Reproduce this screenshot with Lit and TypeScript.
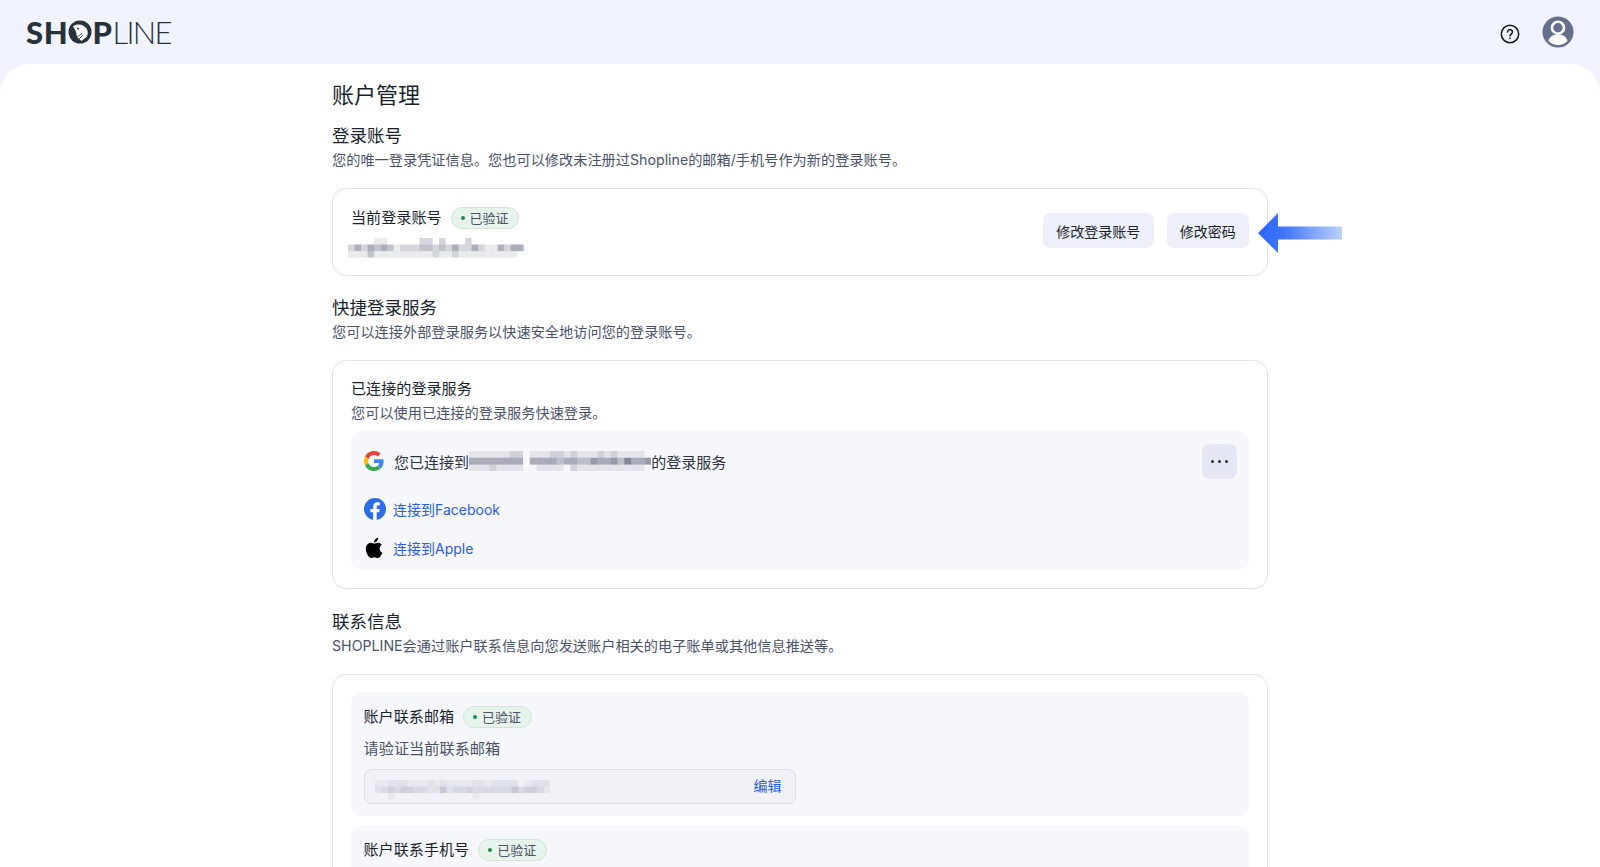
import { LitElement, html, css, svg } from "lit";
import { customElement, property } from "lit/decorators.js";

@customElement("pixel-mask")
class PixelMask extends LitElement {
  @property({ type: Array }) rows: string[] = [];
  @property({ type: Number }) cell = 6.5;
  @property({ type: Number }) scale = 7;
  static styles = css`
    :host { display: block; }
    svg { display: block; filter: blur(0.6px); }
  `;
  render() {
    const w = Math.max(...this.rows.map((r) => r.length)) * this.cell;
    const h = this.rows.length * this.cell;
    return html`<svg width=${w} height=${h} viewBox="0 0 ${w} ${h}">
      ${this.rows.map((r, y) =>
        [...r].map((c, x) =>
          c === "0"
            ? null
            : svg`<rect x=${x * this.cell} y=${y * this.cell} width=${this.cell + 0.1} height=${this.cell + 0.1} fill="#6f7487" fill-opacity=${Number(c) / this.scale}></rect>`
        )
      )}
    </svg>`;
  }
}

@customElement("app-root")
class AppRoot extends LitElement {
  static styles = css`
    :host {
      display: block;
      height: 100vh;
      overflow: hidden;
      background: #f1f4fe;
      font-family: Inter, "Noto Sans CJK SC", sans-serif;
      color: #1a1f2c;
    }
    .top {
      height: 64px;
      display: flex;
      align-items: center;
      justify-content: space-between;
      padding: 0 26px;
    }
    .logo { display: flex; align-items: center; height: 24px; color: #27323d; font-family: Lato, sans-serif; font-size: 31px; line-height: 24px; margin-top: -1px; }
    .logo b { font-weight: 900; letter-spacing: 0.7px; }
    .logo i { font-style: normal; font-weight: 300; letter-spacing: -1.8px; margin-left: 0; }
    .tools { display: flex; align-items: center; gap: 22px; }
    .help { margin-top: 4px; }
    .sheet {
      background: #fff;
      border-radius: 30px 30px 0 0;
      height: 803px;
      overflow: hidden;
      padding: 15px 332px 0;
      box-sizing: border-box;
    }
    h1 { margin: 0 0 13px; font-size: 22px; line-height: 32px; font-weight: 400; }
    h2 { margin: 0; font-size: 17.5px; line-height: 24px; font-weight: 400; }
    .sub { margin: 2px 0 17.5px; font-size: 14.2px; line-height: 20px; color: #4a5266; }
    .card {
      position: relative;
      border: 1.5px solid #dfe2ee;
      border-radius: 14px;
      padding: 18px;
      box-sizing: border-box;
      margin-bottom: 20.5px;
    }
    .card.services { margin-bottom: 21.5px; }
    .account { height: 88px; display: flex; justify-content: space-between; align-items: center; }
    .line { display: flex; align-items: center; gap: 9px; font-size: 15.1px; line-height: 22px; color: #1a1f2c; }
    .badge {
      display: inline-flex; align-items: center; gap: 5px;
      height: 22px; box-sizing: border-box; padding: 0 9.5px 0 9px;
      background: #e6f4ec; border: 1px solid #cfe6d9; border-radius: 11px;
      font-size: 13px; color: #4a5266;
    }
    .badge::before { content: ""; width: 4px; height: 4px; border-radius: 50%; background: #1f8a4c; }
    .acct-left { display: flex; flex-direction: column; gap: 9px; margin: 2px 0 0 -3px; }
    .acct-left .line { margin-left: 3px; }
    .btns { display: flex; gap: 13px; margin-top: -2px; }
    .btn {
      height: 35px; padding: 0 13.25px; display: flex; align-items: center;
      background: #eef0f9; border-radius: 7px; font-size: 14px; color: #1a1f2c;
    }
    .inner { background: #f7f8fc; border-radius: 10px; }
    .conn { margin-top: 8px; padding: 13px 12.5px 0 13px; height: 139px; box-sizing: border-box; }
    .row1 { display: flex; align-items: center; height: 35px; font-size: 15px; color: #2c3240; }
    .row1 .txt { margin-left: 10px; }
    .more {
      margin-left: auto; width: 35px; height: 35px; border-radius: 8px; background: #e5e7f4;
      display: flex; align-items: center; justify-content: center; gap: 4px;
    }
    .more span { width: 3px; height: 3px; border-radius: 50%; background: #2c3240; }
    .link { display: flex; align-items: center; gap: 7px; font-size: 14px; color: #2a5bea; height: 24px; }
    .link.f { margin-top: 5.5px; padding-top: 12px; height: 26px; }
    .link.a { margin-top: 13.5px; }
    .small-sub { margin: 3px 0 0; font-size: 14.2px; line-height: 20px; color: #4a5266; }
    .ctitle { font-size: 15.1px; line-height: 22px; margin-top: -1px; }
    .contact { padding: 17.5px 18px 0; height: 300px; margin: 0; }
    .panel { padding: 14px 13px 13px 12.5px; box-sizing: border-box; height: 124px; margin-bottom: 9px; }
    .panel .small-sub { margin-top: 11px; font-size: 15.2px; }
    .input {
      margin-top: 10px; width: 432px; height: 35px; box-sizing: border-box;
      border: 1.5px solid #dcdee9; border-radius: 7px; background: #f1f2f7;
      display: flex; align-items: center; justify-content: space-between; padding: 0 13px 0 10px;
      font-size: 14px; color: #2a5bea;
    }
    .input pixel-mask { margin-top: 7px; }
    .input span { margin-top: -3px; }
    .arrow { position: absolute; left: 925px; top: 23px; }
  `;

  private acct = [
    "0000110000022020002000000000",
    "242434312223323242242114244",
    "111311111111121121111111110",
  ];
  private google = [
    "111111220111221211121211110",
    "444444440444434433544536445",
    "111211110011110211111111110",
  ];
  private email = [
    "112221112121111221222201222",
    "234344332252334333333534431",
    "001000000000000100000000000",
  ];

  render() {
    return html`
      <header class="top">
        <div class="logo">
          <b>SH</b>
          <svg width="24" height="24" viewBox="0 0 24 24" aria-hidden="true">
            <circle cx="12" cy="12" r="11.5" fill="#27323d"></circle>
            <path d="M5 6.500C9 3.500 15 4 18.500 8.500c1.500 2.200 1.600 5.500.5 8L13.500 21 9 17l-1-5.500L5 6.500z" fill="#fff"></path>
            <path d="M9 17l5-3.500M11 19l4-4" stroke="#27323d" stroke-width="0.8" fill="none"></path>
            <circle cx="10" cy="8.500" r="1" fill="#27323d"></circle>
          </svg>
          <b>P</b><i>LINE</i>
        </div>
        <div class="tools">
          <svg class="help" width="20" height="20" viewBox="0 0 20 20" fill="none" stroke="#14171f" stroke-width="1.5" aria-hidden="true">
            <circle cx="10" cy="10" r="8.700"></circle>
            <path d="M7.600 8a2.400 2.400 0 1 1 3.700 2c-.9.600-1.300 1-1.300 2" stroke-linecap="round"></path>
            <circle cx="10" cy="14.300" r=".6" fill="#14171f" stroke-width=".6"></circle>
          </svg>
          <svg width="32" height="32" viewBox="0 0 32 32" aria-hidden="true">
            <circle cx="16" cy="16" r="15.500" fill="#64708c"></circle>
            <circle cx="16" cy="11.700" r="6" fill="none" stroke="#fff" stroke-width="2.600"></circle>
            <path d="M6.500 25c1.200-4.800 5-6.400 9.500-6.400s8.300 1.600 9.500 6.400A14 14 0 0 1 16 29a14 14 0 0 1-9.500-4z" fill="#fff"></path>
          </svg>
        </div>
      </header>
      <main class="sheet">
        <h1>账户管理</h1>
        <h2>登录账号</h2>
        <p class="sub">您的唯一登录凭证信息。您也可以修改未注册过Shopline的邮箱/手机号作为新的登录账号。</p>
        <section class="card account">
          <div class="acct-left">
            <div class="line">当前登录账号 <span class="badge">已验证</span></div>
            <pixel-mask .rows=${this.acct}></pixel-mask>
          </div>
          <div class="btns">
            <div class="btn">修改登录账号</div>
            <div class="btn">修改密码</div>
          </div>
          <svg class="arrow" width="84" height="42" viewBox="0 0 84 42" aria-hidden="true">
            <defs>
              <linearGradient id="ag" x1="0" x2="1" y1="0" y2="0">
                <stop offset="0" stop-color="#2f66fb"></stop>
                <stop offset="0.3" stop-color="#3f74fc"></stop>
                <stop offset="1" stop-color="#bcd2ff"></stop>
              </linearGradient>
            </defs>
            <path d="M0 21 20 1v13.500h64v13H20V41z" fill="url(#ag)"></path>
          </svg>
        </section>

        <h2>快捷登录服务</h2>
        <p class="sub">您可以连接外部登录服务以快速安全地访问您的登录账号。</p>
        <section class="card services">
          <div class="ctitle">已连接的登录服务</div>
          <p class="small-sub">您可以使用已连接的登录服务快速登录。</p>
          <div class="inner conn">
            <div class="row1">
              <svg width="20" height="20" viewBox="0 0 48 48" aria-hidden="true">
                <path fill="#EA4335" d="M24 9.500c3.540 0 6.710 1.220 9.210 3.600l6.850-6.850C35.900 2.380 30.470 0 24 0 14.620 0 6.510 5.380 2.560 13.220l7.980 6.190C12.430 13.720 17.740 9.500 24 9.500z"></path>
                <path fill="#4285F4" d="M46.980 24.550c0-1.570-.15-3.090-.38-4.550H24v9.020h12.940c-.58 2.960-2.260 5.480-4.780 7.180l7.730 6c4.510-4.180 7.090-10.360 7.090-17.650z"></path>
                <path fill="#FBBC05" d="M10.530 28.590c-.48-1.450-.76-2.990-.76-4.590s.27-3.140.76-4.590l-7.980-6.190C.92 16.460 0 20.120 0 24c0 3.880.92 7.540 2.560 10.780l7.970-6.190z"></path>
                <path fill="#34A853" d="M24 48c6.480 0 11.930-2.130 15.890-5.810l-7.730-6c-2.150 1.450-4.920 2.300-8.160 2.300-6.260 0-11.570-4.220-13.470-9.910l-7.980 6.190C6.510 42.620 14.620 48 24 48z"></path>
              </svg>
              <span class="txt">您已连接到</span>
              <pixel-mask .rows=${this.google} .cell=${6.75}></pixel-mask>
              <span>的登录服务</span>
              <div class="more"><span></span><span></span><span></span></div>
            </div>
            <div class="link f">
              <svg width="22" height="22" viewBox="0 0 24 24" aria-hidden="true">
                <circle cx="12" cy="12" r="12" fill="#2a6fe8"></circle>
                <path d="M16.600 15.500l.55-3.500h-3.350V9.700c0-.95.47-1.900 1.970-1.900h1.530V4.850s-1.390-.24-2.710-.24c-2.760 0-4.570 1.680-4.570 4.710V12H7.000v3.500h3.020V24h3.780v-8.500z" fill="#fff"></path>
              </svg>
              连接到Facebook
            </div>
            <div class="link a">
              <svg width="22" height="22" viewBox="0 0 24 24" aria-hidden="true">
                <path d="M17.050 12.600c-.03-2.800 2.290-4.150 2.390-4.220-1.300-1.900-3.330-2.160-4.050-2.190-1.720-.17-3.360 1.010-4.240 1.010-.87 0-2.220-.99-3.650-.96-1.880.03-3.610 1.090-4.580 2.770-1.950 3.390-.5 8.400 1.400 11.150.93 1.340 2.040 2.850 3.490 2.800 1.400-.06 1.930-.91 3.630-.91 1.690 0 2.170.91 3.650.88 1.510-.03 2.460-1.370 3.380-2.720 1.070-1.560 1.510-3.070 1.530-3.150-.03-.01-2.930-1.120-2.960-4.460zM14.270 4.390c.77-.94 1.290-2.240 1.150-3.540-1.110.05-2.460.74-3.250 1.670-.71.830-1.340 2.150-1.170 3.420 1.240.1 2.500-.63 3.270-1.550z" fill="#000"></path>
              </svg>
              连接到Apple
            </div>
          </div>
        </section>

        <h2>联系信息</h2>
        <p class="sub">SHOPLINE会通过账户联系信息向您发送账户相关的电子账单或其他信息推送等。</p>
        <section class="card contact">
          <div class="inner panel">
            <div class="line">账户联系邮箱 <span class="badge">已验证</span></div>
            <p class="small-sub">请验证当前联系邮箱</p>
            <div class="input"><pixel-mask .rows=${this.email} .scale=${16}></pixel-mask><span>编辑</span></div>
          </div>
          <div class="inner panel">
            <div class="line">账户联系手机号 <span class="badge">已验证</span></div>
          </div>
        </section>
      </main>
    `;
  }
}
